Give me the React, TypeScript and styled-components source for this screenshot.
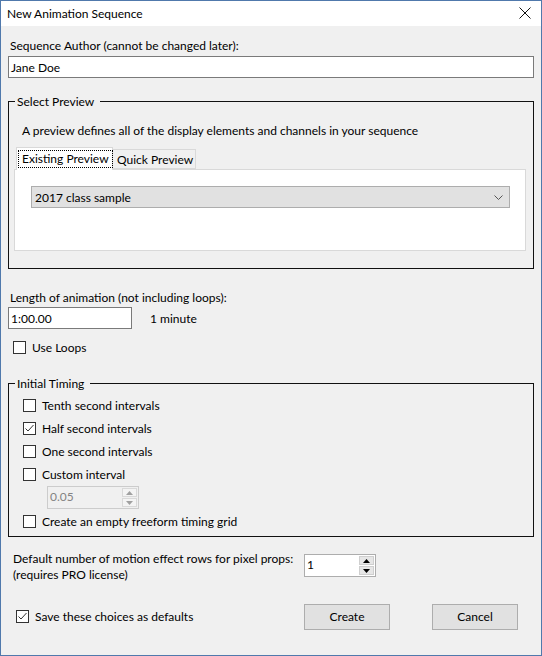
import styled, { createGlobalStyle } from "styled-components";

const GlobalStyle = createGlobalStyle`
  html, body {
    margin: 0;
    padding: 0;
    background: #ffffff;
  }
  body {
    font-family: "Lato", "Noto Sans", sans-serif;
    font-size: 12px;
    color: #000000;
  }
  * {
    box-sizing: border-box;
  }
`;

const Window = styled.div`
  width: 542px;
  height: 656px;
  border: 1px solid #5079ac;
  background: #f0f0f0;
  display: flex;
  flex-direction: column;
`;

const TitleBar = styled.div`
  height: 25px;
  background: #ffffff;
  display: flex;
  align-items: center;
  justify-content: space-between;
  padding: 0 10px 1px 6px;
`;

const Title = styled.span`
  font-size: 12px;
`;

const Content = styled.div`
  padding: 0 7px;
  display: flex;
  flex-direction: column;
`;

const Label = styled.div<{ $top: number; $left?: number }>`
  margin-top: ${(p) => p.$top}px;
  margin-left: ${(p) => p.$left ?? 2}px;
  line-height: 15px;
  white-space: nowrap;
`;

const TextBox = styled.div<{ $top: number; $width?: number }>`
  margin-top: ${(p) => p.$top}px;
  width: ${(p) => (p.$width ? `${p.$width}px` : "100%")};
  height: 22px;
  background: #ffffff;
  border: 1px solid #7a7a7a;
  display: flex;
  align-items: center;
  padding-left: 2px;
`;

const GroupHeader = styled.div<{ $top: number }>`
  margin-top: ${(p) => p.$top}px;
  height: 15px;
  display: flex;
  line-height: 15px;

  &::before {
    content: "";
    width: 6px;
    margin-top: 7px;
    border-top: 1px solid #111;
    border-left: 1px solid #111;
  }
  &::after {
    content: "";
    flex: 1;
    margin-top: 7px;
    margin-left: 6px;
    border-top: 1px solid #111;
    border-right: 1px solid #111;
  }
`;

const GroupTitle = styled.span`
  padding-left: 2px;
`;

const GroupBody = styled.div<{ $height: number; $pad: string }>`
  height: ${(p) => p.$height}px;
  border: 1px solid #111;
  border-top: none;
  padding: ${(p) => p.$pad};
  display: flex;
  flex-direction: column;
`;

const TabStrip = styled.div`
  margin-top: 9px;
  height: 22px;
  display: flex;
  align-items: flex-end;
  padding-left: 7px;
`;

const Tab = styled.div<{ $active?: boolean }>`
  height: ${(p) => (p.$active ? 23 : 20)}px;
  margin-bottom: ${(p) => (p.$active ? -1 : 0)}px;
  padding: ${(p) => (p.$active ? "2px 0 0 1px" : "0 0 0 4px")};
  width: ${(p) => (p.$active ? 97 : 83)}px;
  background: ${(p) => (p.$active ? "#ffffff" : "#f0f0f0")};
  border: 1px solid #d9d9d9;
  border-bottom: ${(p) => (p.$active ? "none" : "1px solid #d9d9d9")};
  border-left: ${(p) => (p.$active ? "1px solid #d9d9d9" : "none")};
  display: flex;
  align-items: ${(p) => (p.$active ? "flex-start" : "center")};
  white-space: nowrap;
  position: relative;
  z-index: ${(p) => (p.$active ? 1 : 0)};
`;

const FocusText = styled.span`
  border: 1px dotted #000;
  padding: 0 3px;
  line-height: 16px;
`;

const TabPanel = styled.div`
  margin: 0 7px 0 5px;
  height: 82px;
  background: #ffffff;
  border: 1px solid #d9d9d9;
  padding: 16px 15px 0 16px;
`;

const Combo = styled.div`
  height: 22px;
  background: #e1e1e1;
  border: 1px solid #adadad;
  display: flex;
  align-items: center;
  justify-content: space-between;
  padding: 0 6px 0 3px;
`;

const Row = styled.div<{ $top: number; $left: number }>`
  margin-top: ${(p) => p.$top}px;
  margin-left: ${(p) => p.$left}px;
  display: flex;
  align-items: center;
`;

const CheckRow = styled.div<{ $top: number; $left?: number }>`
  margin-top: ${(p) => p.$top}px;
  margin-left: ${(p) => p.$left ?? 0}px;
  height: 16px;
  display: flex;
  align-items: center;
  gap: 6px;
  white-space: nowrap;
`;

const Box = styled.span`
  width: 13px;
  height: 13px;
  background: #ffffff;
  border: 1px solid #333333;
  display: flex;
  align-items: center;
  justify-content: center;
`;

const Hint = styled.span`
  margin-left: 18px;
`;

const Spinner = styled.div<{ $disabled?: boolean; $width: number; $top: number; $left: number }>`
  margin-top: ${(p) => p.$top}px;
  margin-left: ${(p) => p.$left}px;
  width: ${(p) => p.$width}px;
  height: 23px;
  border: 1px solid ${(p) => (p.$disabled ? "#cccccc" : "#adadad")};
  background: ${(p) => (p.$disabled ? "#f0f0f0" : "#ffffff")};
  color: ${(p) => (p.$disabled ? "#838383" : "#000")};
  display: flex;
  align-items: stretch;
  flex-shrink: 0;
`;

const SpinText = styled.span`
  flex: 1;
  padding: 2px 0 0 2px;
  line-height: 16px;
`;

const SpinButtons = styled.div`
  width: 16px;
  display: flex;
  flex-direction: column;
  gap: 1px;
  padding: 1px 1px 1px 0;
`;

const SpinButton = styled.div<{ $disabled?: boolean }>`
  flex: 1;
  background: ${(p) => (p.$disabled ? "#f4f4f4" : "#e6e6e6")};
  border: 1px solid ${(p) => (p.$disabled ? "#d9d9d9" : "#cfcfcf")};
  display: flex;
  align-items: center;
  justify-content: center;
`;

const ProRow = styled.div`
  margin-top: 14px;
  margin-left: 5px;
  display: flex;
  align-items: flex-start;
`;

const ProText = styled.div`
  line-height: 16px;
  width: 291px;
`;

const BottomRow = styled.div`
  margin-top: 21px;
  height: 25px;
  display: flex;
  align-items: center;
`;

const Buttons = styled.div`
  margin-left: auto;
  margin-right: 16px;
  display: flex;
  gap: 42px;
`;

const Button = styled.div`
  width: 86px;
  height: 26px;
  background: #e1e1e1;
  border: 1px solid #adadad;
  display: flex;
  align-items: center;
  justify-content: center;
`;

const Check = () => (
  <svg width="11" height="11" viewBox="0 0 11 11">
    <polyline points="1.5,5.5 4,8 9.5,2" fill="none" stroke="#333" strokeWidth="1" />
  </svg>
);

const Arrow = ({ up, color }: { up?: boolean; color: string }) => (
  <svg width="7" height="4" viewBox="0 0 7 4">
    <polygon points={up ? "3.5,0 7,4 0,4" : "0,0 7,0 3.5,4"} fill={color} />
  </svg>
);

function CheckBox({ label, checked, top, left }: { label: string; checked?: boolean; top: number; left?: number }) {
  return (
    <CheckRow $top={top} $left={left}>
      <Box>{checked && <Check />}</Box>
      <span>{label}</span>
    </CheckRow>
  );
}

const timing = [
  { label: "Tenth second intervals" },
  { label: "Half second intervals", checked: true },
  { label: "One second intervals" },
  { label: "Custom interval" },
];

export default function App() {
  return (
    <>
      <GlobalStyle />
      <Window>
        <TitleBar>
          <Title>New Animation Sequence</Title>
          <svg width="12" height="12" viewBox="0 0 12 12">
            <path d="M0.5 0.5 L11.5 11.5 M11.5 0.5 L0.5 11.5" stroke="#111" strokeWidth="1" />
          </svg>
        </TitleBar>
        <Content>
          <Label $top={12}>Sequence Author (cannot be changed later):</Label>
          <TextBox $top={3}>Jane Doe</TextBox>

          <GroupHeader $top={16}>
            <GroupTitle>Select Preview</GroupTitle>
          </GroupHeader>
          <GroupBody $height={160} $pad="14px 0 0 0">
            <Label $top={0} $left={13}>
              A preview defines all of the display elements and channels in your sequence
            </Label>
            <TabStrip>
              <Tab $active>
                <FocusText>Existing Preview</FocusText>
              </Tab>
              <Tab>Quick Preview</Tab>
            </TabStrip>
            <TabPanel>
              <Combo>
                <span>2017 class sample</span>
                <svg width="9" height="5" viewBox="0 0 9 5">
                  <polyline points="0.5,0.5 4.5,4.5 8.5,0.5" fill="none" stroke="#555" strokeWidth="1" />
                </svg>
              </Combo>
            </TabPanel>
          </GroupBody>

          <Label $top={21}>Length of animation (not including loops):</Label>
          <Row $top={2} $left={0}>
            <TextBox $top={0} $width={124}>1:00.00</TextBox>
            <Hint>1 minute</Hint>
          </Row>
          <CheckBox label="Use Loops" top={10} left={5} />

          <GroupHeader $top={21}>
            <GroupTitle>Initial Timing</GroupTitle>
          </GroupHeader>
          <GroupBody $height={146} $pad="6px 0 0 14px">
            {timing.map((t, i) => (
              <CheckBox key={t.label} label={t.label} checked={t.checked} top={i === 0 ? 0 : 7} />
            ))}
            <Spinner $disabled $width={92} $top={4} $left={24}>
              <SpinText>0.05</SpinText>
              <SpinButtons>
                <SpinButton $disabled>
                  <Arrow up color="#a0a0a0" />
                </SpinButton>
                <SpinButton $disabled>
                  <Arrow color="#a0a0a0" />
                </SpinButton>
              </SpinButtons>
            </Spinner>
            <CheckBox label="Create an empty freeform timing grid" top={4} />
          </GroupBody>

          <ProRow>
            <ProText>
              Default number of motion effect rows for pixel props:
              <br />
              (requires PRO license)
            </ProText>
            <Spinner $width={72} $top={3} $left={0}>
              <SpinText>1</SpinText>
              <SpinButtons>
                <SpinButton>
                  <Arrow up color="#000" />
                </SpinButton>
                <SpinButton>
                  <Arrow color="#000" />
                </SpinButton>
              </SpinButtons>
            </Spinner>
          </ProRow>

          <BottomRow>
            <CheckBox label="Save these choices as defaults" checked top={0} left={8} />
            <Buttons>
              <Button>Create</Button>
              <Button>Cancel</Button>
            </Buttons>
          </BottomRow>
        </Content>
      </Window>
    </>
  );
}
